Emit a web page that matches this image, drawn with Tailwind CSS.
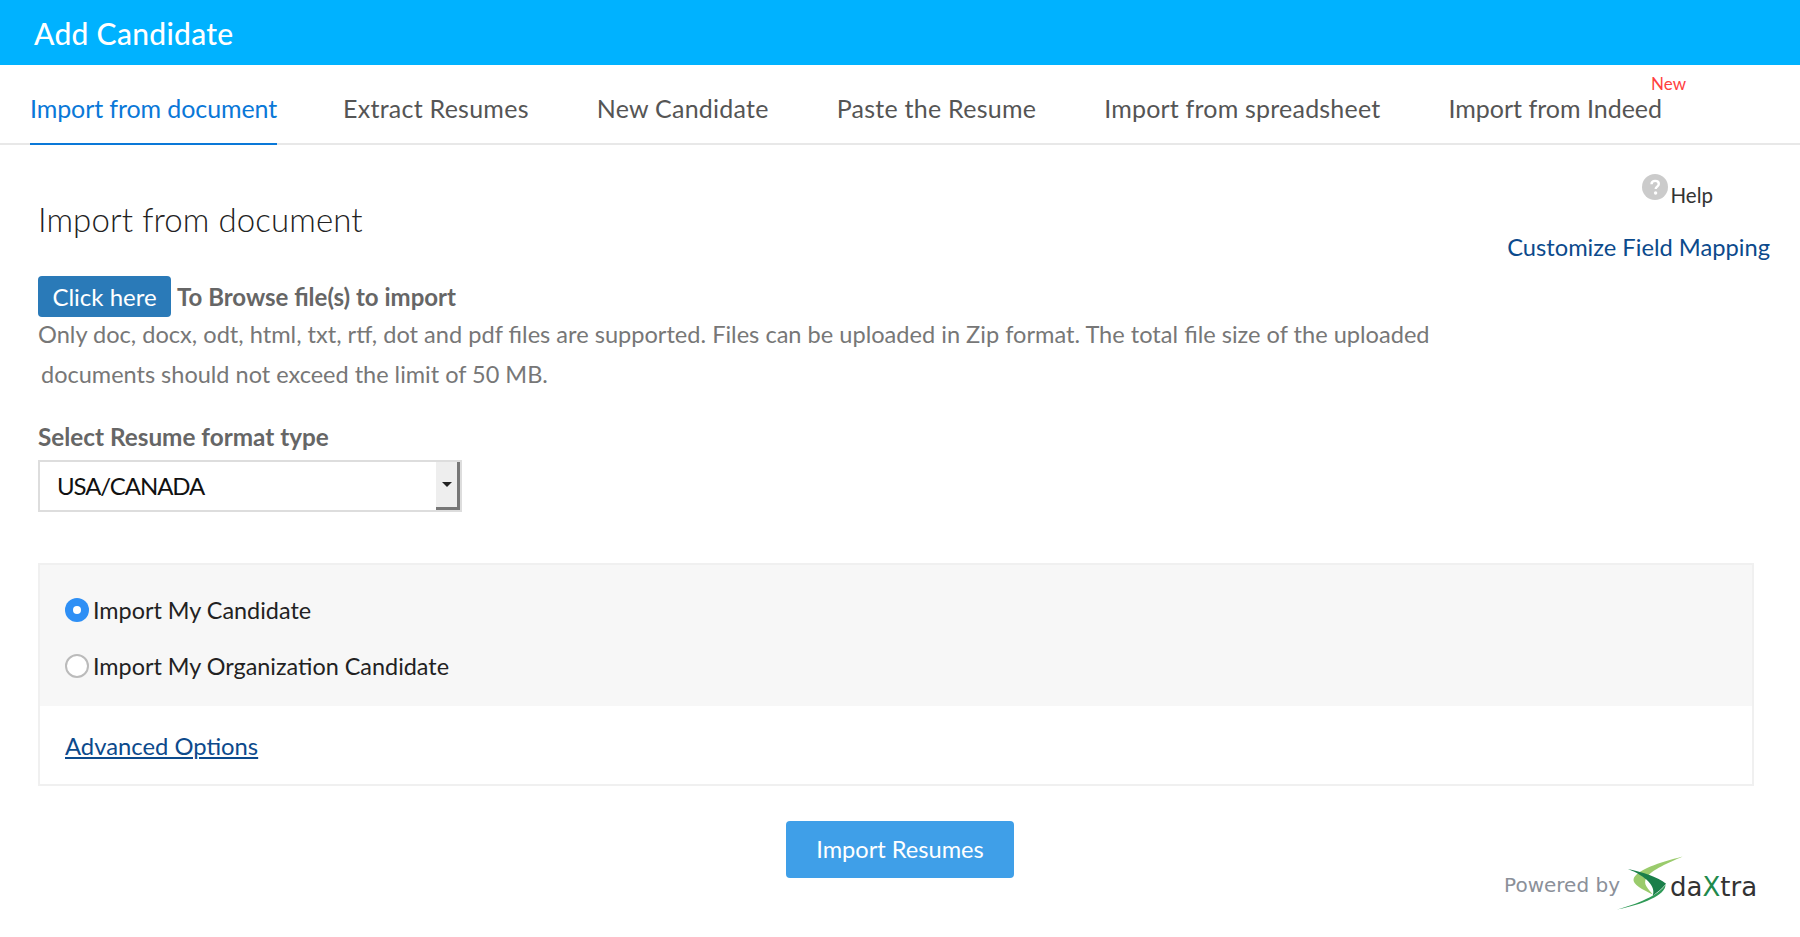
<!DOCTYPE html>
<html lang="en">
<head>
    <meta charset="UTF-8">
    <title>Add Candidate</title>
    <script src="https://cdn.jsdelivr.net/npm/@tailwindcss/browser@4"></script>
</head>
<body class="bg-white font-['Lato','Open_Sans',sans-serif] text-[#555]">
    <!-- Header -->
    <header class="h-[65px] bg-[#00b2ff] flex items-center pl-[34px]">
        <h1 class="text-[30px] leading-[36px] tracking-[0.3px] font-medium text-white">Add Candidate</h1>
    </header>

    <!-- Tabs -->
    <nav class="h-[80px] flex gap-[68px] pl-[30px] border-b-2 border-[#e8e8e8] text-[25px]">
        <a href="#" class="h-[80px] mr-[-2px] pt-[27px] leading-[32px] tracking-[-0.1px] border-b-2 border-[#0a78d8] text-[#0a78d8]">Import from document</a>
        <a href="#" class="pt-[27px] leading-[32px] tracking-[0.25px]">Extract Resumes</a>
        <a href="#" class="pt-[27px] leading-[32px] tracking-[0.25px]">New Candidate</a>
        <a href="#" class="pt-[27px] leading-[32px] tracking-[0.25px]">Paste the Resume</a>
        <a href="#" class="pt-[27px] leading-[32px] tracking-[0.2px]">Import from spreadsheet</a>
        <a href="#" class="relative pt-[27px] leading-[32px]">Import from Indeed
            <span class="absolute right-[-24px] top-[9px] text-[17px] leading-[20px] text-[#ff4040]">New</span>
        </a>
    </nav>

    <main class="pl-[38px] pr-[46px]">
        <div class="flex justify-between">
            <div>
                <h2 class="mt-[54px] text-[33px] leading-[40px] tracking-[0.1px] font-light text-[#222]">Import from document</h2>
                <div class="mt-[37px] flex items-center gap-[6px]">
                    <button class="w-[133px] h-[41px] bg-[#2a7ab8] rounded text-[24px] text-white">Click here</button>
                    <span class="text-[24px] font-bold text-[#666]">To Browse file(s) to import</span>
                </div>
                <p class="mt-[-1px] w-[1420px] text-[23.6px] leading-[36px] text-[#777]">Only doc, docx, odt, html, txt, rtf, dot and pdf files are supported. Files can be uploaded in Zip format. The total file size of the uploaded</p>
                <p class="mt-[4px] ml-[3px] text-[23.5px] leading-[36px] text-[#777]">documents should not exceed the limit of 50 MB.</p>
            </div>
            <div class="flex flex-col items-end mr-[-16px]">
                <div class="mt-[29px] mr-[57px] flex items-start gap-[3px]">
                    <svg class="w-[26px] h-[26px]" viewBox="0 0 26 26">
                        <circle cx="13" cy="13" r="13" fill="#cbcbcb"/>
                        <path d="M9.5 10.2c0-2 1.6-3.3 3.7-3.3s3.6 1.2 3.6 3c0 2.600-3.100 2.700-3.100 5" fill="none" stroke="#fff" stroke-width="2.400"/>
                        <circle cx="13.600" cy="19" r="1.700" fill="#fff"/>
                    </svg>
                    <span class="mt-[8px] text-[20.5px] leading-[26px] text-[#333]">Help</span>
                </div>
                <a href="#" class="mt-[24px] text-[23.7px] leading-[30px] text-[#0c4a8c]">Customize Field Mapping</a>
            </div>
        </div>

        <!-- Resume format -->
        <label class="block mt-[30px] text-[24.3px] leading-[30px] font-bold text-[#666]">Select Resume format type</label>
        <div class="mt-[8px] w-[424px] h-[52px] flex items-stretch border-2 border-[#ddd] bg-white">
            <span class="flex-1 pl-[17px] text-[24px] leading-[48px] tracking-[-1.1px] text-[#111]">USA/CANADA</span>
            <span class="w-[24px] flex items-center justify-center border-r-[3px] border-b-[3px] border-[#777] bg-[#eee]">
                <span class="border-x-[5px] border-t-[5px] border-x-transparent border-t-[#222]"></span>
            </span>
        </div>

        <!-- Candidate scope -->
        <section class="mt-[51px] border-2 border-[#f0f0f0]">
            <div class="h-[141px] bg-[#f7f7f7] pl-[25px] pt-[33px] flex flex-col gap-[32px] text-[23.4px] leading-[24px] text-[#222]">
                <label class="flex items-center gap-[4px]">
                    <span class="w-[24px] h-[24px] rounded-full bg-[#2e8ff5] flex items-center justify-center">
                        <span class="w-[8px] h-[8px] rounded-full bg-white"></span>
                    </span>
                    Import My Candidate
                </label>
                <label class="flex items-center gap-[4px]">
                    <span class="w-[24px] h-[24px] rounded-full border-2 border-[#bbb] bg-white"></span>
                    Import My Organization Candidate
                </label>
            </div>
            <div class="h-[78px] pl-[25px] pt-[25px]">
                <a href="#" class="text-[23.8px] leading-[30px] underline text-[#0c4a8c]">Advanced Options</a>
            </div>
        </section>

        <!-- Footer actions -->
        <div class="mt-[35px] pl-[8px] grid grid-cols-[1fr_228px_1fr]">
            <div></div>
            <button class="h-[57px] bg-[#3f9fe8] rounded-sm text-[23.6px] text-white">Import Resumes</button>
            <div class="flex items-start justify-end">
                <span class="mt-[52px] mr-[-7px] font-['DejaVu_Sans',sans-serif] text-[20px] leading-[24px] text-[#8b9099]">Powered by</span>
                <div class="relative mt-[32px] w-[141px] h-[60px]">
                    <svg class="absolute left-0 top-0 w-[73px] h-[60px]" viewBox="400 40 220 180">
                        <path d="M610 50C540 68 470 90 462 118C458 135 490 150 520 165C505 145 490 135 500 115C515 90 570 68 610 50Z" fill="#9acb6c"/>
                        <path d="M445 88C490 98 535 112 560 132C545 150 530 160 520 168C530 140 500 110 445 88Z" fill="#1a7f4a"/>
                        <path d="M410 210C470 195 540 165 558 135C560 165 490 195 410 210Z" fill="#2f9a57"/>
                    </svg>
                    <span class="absolute left-[57px] top-[19px] font-['DejaVu_Sans',sans-serif] text-[26px] leading-[30px] text-[#333]">da<span class="text-[#1f8a4c]">X</span>tra</span>
                </div>
            </div>
        </div>
    </main>
</body>
</html>
